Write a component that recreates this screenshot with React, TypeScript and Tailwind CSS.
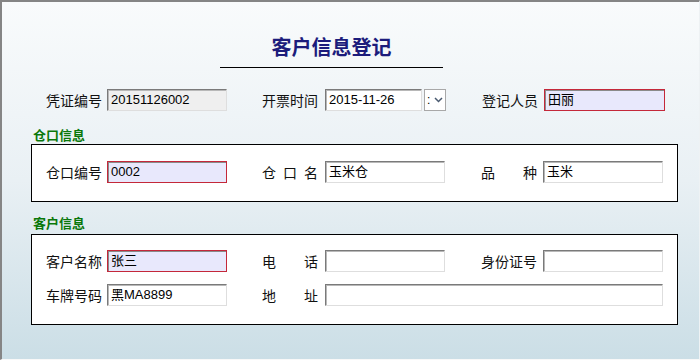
import React from "react";

const cjk = { fontFamily: '"Noto Sans CJK SC", sans-serif' };
const mixed = { fontFamily: '"Liberation Sans", "Noto Sans CJK SC", sans-serif' };

type FieldProps = {
  value?: string;
  width?: string;
  tone?: "normal" | "required" | "disabled";
};

const Field = ({ value = "", width = "w-[121px]", tone = "normal" }: FieldProps) => {
  const toneClass =
    tone === "required"
      ? "border-[#c4283a] bg-[#e8e8fc] shadow-[inset_1px_1px_0_#8a8a8a]"
      : tone === "disabled"
        ? "border-t-[#7a7a7a] border-l-[#7a7a7a] border-r-[#dedede] border-b-[#dedede] bg-[#efefef] shadow-[inset_1px_1px_0_#b8b8b8]"
        : "border-t-[#7a7a7a] border-l-[#7a7a7a] border-r-[#dedede] border-b-[#dedede] bg-white shadow-[inset_1px_1px_0_#b8b8b8]";
  return (
    <div
      style={mixed}
      className={`${width} h-[22px] shrink-0 border ${toneClass} pl-[3px] text-[13px] leading-[20px] text-black whitespace-nowrap overflow-hidden`}
    >
      {value}
    </div>
  );
};

// label spread over 56px, like 仓 口 名 / 品  种
const Label = ({ text, gap }: { text: string; gap: string }) => (
  <div style={cjk} className={`w-[56px] ${gap} shrink-0 flex justify-between text-[14px] leading-[22px] text-[#111]`}>
    {text.split("").map((c, i) => (
      <span key={i}>{c}</span>
    ))}
  </div>
);

const Section = ({
  title,
  children,
  box,
}: {
  title: string;
  children: React.ReactNode;
  box: string;
}) => (
  <>
    <div style={cjk} className="pl-[31px] text-[13px] font-bold leading-[16px] text-[#0a780a]">
      {title}
    </div>
    <div className={`ml-[29px] w-[647px] ${box} border border-black bg-white pl-[14px] flex flex-col gap-[12px]`}>
      {children}
    </div>
  </>
);

export default function App() {
  return (
    <div className="w-[700px] h-[360px] border-t-2 border-l-2 border-t-[#858585] border-l-[#858585] border-r border-b border-r-[#eef2f4] border-b-[#f8f8f8] bg-gradient-to-b from-[#f9fbfc] via-[#e9f0f4] to-[#cbdee6]">
      {/* title */}
      <div
        style={cjk}
        className="ml-[218px] mt-[31px] w-[223px] pb-[6px] border-b border-black text-center text-[20px] font-bold leading-[28px] text-[#1c1c7c]"
      >
        客户信息登记
      </div>

      {/* voucher row */}
      <div className="mt-[21px] pl-[44px] flex items-center">
        <Label text="凭证编号" gap="mr-[5px]" />
        <Field value="20151126002" width="w-[120px]" tone="disabled" />
        <div className="w-[35px]" />
        <Label text="开票时间" gap="mr-[7px]" />
        <Field value="2015-11-26" width="w-[97px]" />
        <div className="ml-[2px] w-[22px] h-[22px] border border-[#a8a8a8] bg-white flex items-center">
          <span className="ml-[2px] text-[12px] leading-none text-black" style={mixed}>:</span>
          <svg width="9" height="6" viewBox="0 0 9 6" className="ml-[4px]">
            <path d="M1 1 L4.5 4.5 L8 1" stroke="#4a5a70" strokeWidth="1.5" fill="none" />
          </svg>
        </div>
        <div className="w-[36px]" />
        <Label text="登记人员" gap="mr-[6px]" />
        <Field value="田丽" tone="required" />
      </div>

      <div className="mt-[16px]" />
      <Section title="仓口信息" box="mt-[1px] h-[58px] pt-[16px]">
        <div className="flex items-center">
          <Label text="仓口编号" gap="mr-[5px]" />
          <Field value="0002" width="w-[120px]" tone="required" />
          <div className="w-[35px]" />
          <Label text="仓口名" gap="mr-[7px]" />
          <Field value="玉米仓" width="w-[120px]" />
          <div className="w-[36px]" />
          <Label text="品种" gap="mr-[6px]" />
          <Field value="玉米" width="w-[120px]" />
        </div>
      </Section>

      <div className="mt-[13px]" />
      <Section title="客户信息" box="mt-[3px] h-[91px] pt-[15px]">
        <div className="flex items-center">
          <Label text="客户名称" gap="mr-[5px]" />
          <Field value="张三" width="w-[120px]" tone="required" />
          <div className="w-[35px]" />
          <Label text="电话" gap="mr-[7px]" />
          <Field width="w-[120px]" />
          <div className="w-[36px]" />
          <Label text="身份证号" gap="mr-[6px]" />
          <Field width="w-[120px]" />
        </div>
        <div className="flex items-center">
          <Label text="车牌号码" gap="mr-[5px]" />
          <Field value="黑MA8899" width="w-[120px]" />
          <div className="w-[35px]" />
          <Label text="地址" gap="mr-[7px]" />
          <Field width="w-[338px]" />
        </div>
      </Section>
    </div>
  );
}
